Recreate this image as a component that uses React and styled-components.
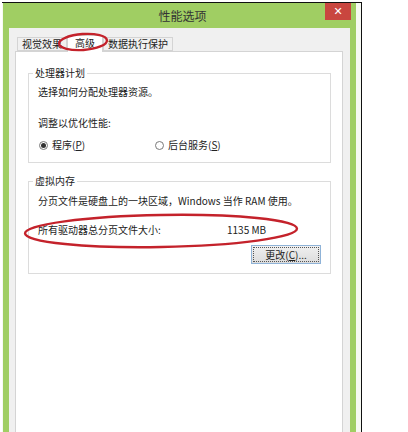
import React from 'react'
import styled, { createGlobalStyle } from 'styled-components'

const GlobalStyle = createGlobalStyle`
  html, body { margin: 0; padding: 0; background: #fff; }
  body { font-family: "Noto Sans CJK SC", "Noto Sans", sans-serif; }
`

const green = '#a0ce63'
const textColor = '#222'

const Screen = styled.div`
  position: relative;
  width: 408px;
  height: 432px;
  overflow: hidden;
  padding: 2px 0 0 2px;
  box-sizing: border-box;
  background: #fff;
`

const Window = styled.div`
  width: 360px;
  height: 440px;
  box-sizing: border-box;
  border-top: 1px solid #111;
  border-right: 1px solid #111;
  padding: 0 5px 0 1px;
  background: #f6f9f2;
`

const Frame = styled.div`
  display: flex;
  flex-direction: column;
  height: 100%;
  background: ${green};
  padding: 0 6px;
`

const TitleBar = styled.div`
  position: relative;
  height: 25px;
  display: flex;
  align-items: flex-start;
  justify-content: center;
`

const Title = styled.div`
  margin-top: 5px;
  margin-left: 6px;
  font-size: 12px;
  line-height: 16px;
  color: #333;
`

const CloseButton = styled.div`
  position: absolute;
  right: -1px;
  top: 0;
  width: 26px;
  height: 17px;
  background: #c9463f;
  color: #fff;
  font: bold 11px/17px "DejaVu Sans", sans-serif;
  text-align: center;
`

const Client = styled.div`
  flex: 1;
  background: #f0f0f0;
  padding: 7px 7px 0 6px;
  display: flex;
  flex-direction: column;
`

const Tabs = styled.div`
  display: flex;
  align-items: flex-end;
  height: 16px;
  padding-left: 2px;
  position: relative;
  z-index: 1;
`

const Tab = styled.div`
  box-sizing: border-box;
  height: ${p => (p.$active ? '17px' : '14px')};
  margin-bottom: ${p => (p.$active ? '-1px' : '0')};
  padding: 0 ${p => p.$pad || 4}px;
  border: 1px solid #d4d4d4;
  border-bottom: ${p => (p.$active ? 'none' : '1px solid #d4d4d4')};
  background: ${p => (p.$active ? '#fff' : '#f0f0f0')};
  font-size: 10px;
  line-height: ${p => (p.$active ? '14px' : '12px')};
  color: ${textColor};
  white-space: nowrap;
`

const Panel = styled.div`
  flex: 1;
  background: #fff;
  border: 1px solid #d4d4d4;
  padding: 21px 11px 0 12px;
  display: flex;
  flex-direction: column;
  gap: 18px;
`

const Group = styled.div`
  position: relative;
  border: 1px solid #dcdcdc;
  padding: ${p => p.$pad};
  display: flex;
  flex-direction: column;
  font-size: 10px;
  line-height: 14px;
  color: ${textColor};
`

const Legend = styled.div`
  position: absolute;
  top: -8px;
  left: 4px;
  padding: 0 2px;
  background: #fff;
  font-size: 10px;
  line-height: 14px;
  color: ${textColor};
`

const Line = styled.div`
  margin-top: ${p => p.$gap || 0}px;
  white-space: nowrap;
`

const RadioRow = styled.div`
  margin-top: 8px;
  display: grid;
  grid-template-columns: 116px auto;
  padding-left: 1px;
`

const RadioLabel = styled.label`
  display: flex;
  align-items: center;
  gap: 4px;
`

const RadioDot = styled.span`
  box-sizing: border-box;
  width: 9px;
  height: 9px;
  border-radius: 50%;
  border: 1px solid #7a7a7a;
  background: #fff;
  display: flex;
  align-items: center;
  justify-content: center;
  &::after {
    content: '';
    width: 5px;
    height: 5px;
    border-radius: 50%;
    background: ${p => (p.$checked ? '#333' : 'transparent')};
  }
`

const Underline = styled.span`
  text-decoration: underline;
`

const SizeRow = styled.div`
  margin-top: 15px;
  display: grid;
  grid-template-columns: 189px auto;
`

const ButtonRow = styled.div`
  margin-top: 8px;
  display: flex;
  justify-content: flex-end;
`

const Button = styled.div`
  box-sizing: border-box;
  width: 70px;
  height: 19px;
  border: 1px solid #8fb3d8;
  outline: 1px dotted #555;
  outline-offset: -3px;
  background: linear-gradient(#f0f0f0, #dcdcdc);
  text-align: center;
  font-size: 10px;
  line-height: 17px;
  color: ${textColor};
`

const Marks = styled.svg`
  position: absolute;
  left: 0;
  top: 0;
  z-index: 5;
  pointer-events: none;
`

export default function App() {
  return (
    <>
      <GlobalStyle />
      <Screen>
        <Window>
          <Frame>
            <TitleBar>
              <Title>性能选项</Title>
              <CloseButton>✕</CloseButton>
            </TitleBar>
            <Client>
              <Tabs>
                <Tab>视觉效果</Tab>
                <Tab $active $pad={7}>高级</Tab>
                <Tab>数据执行保护</Tab>
              </Tabs>
              <Panel>
                <Group $pad="11px 9px 10px 9px">
                  <Legend>处理器计划</Legend>
                  <Line>选择如何分配处理器资源。</Line>
                  <Line $gap={17}>调整以优化性能:</Line>
                  <RadioRow>
                    <RadioLabel>
                      <RadioDot $checked />
                      <span>程序(<Underline>P</Underline>)</span>
                    </RadioLabel>
                    <RadioLabel>
                      <RadioDot />
                      <span>后台服务(<Underline>S</Underline>)</span>
                    </RadioLabel>
                  </RadioRow>
                </Group>
                <Group $pad="12px 9px 9px 9px">
                  <Legend>虚拟内存</Legend>
                  <Line>分页文件是硬盘上的一块区域，Windows 当作 RAM 使用。</Line>
                  <SizeRow>
                    <span>所有驱动器总分页文件大小:</span>
                    <span>1135 MB</span>
                  </SizeRow>
                  <ButtonRow>
                    <Button>
                      更改(<Underline>C</Underline>)...
                    </Button>
                  </ButtonRow>
                </Group>
              </Panel>
            </Client>
          </Frame>
        </Window>
        <Marks width="408" height="432" viewBox="0 0 408 432">
          <ellipse cx="83" cy="42" rx="24" ry="8" transform="rotate(-4 83 42)"
            fill="none" stroke="#c4222b" strokeWidth="2.4" />
          <ellipse cx="161" cy="231" rx="136" ry="16" transform="rotate(-1 161 231)"
            fill="none" stroke="#c4222b" strokeWidth="2.4" />
        </Marks>
      </Screen>
    </>
  )
}
